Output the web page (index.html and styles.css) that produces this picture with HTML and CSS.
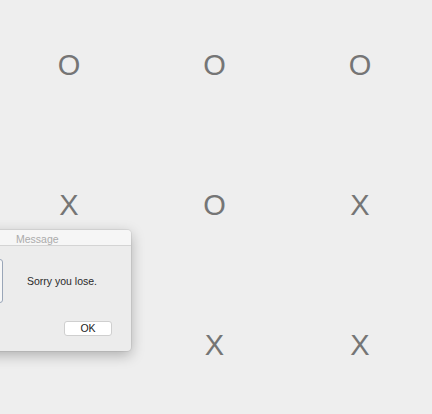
FILE: index.html
```html
<!DOCTYPE html>
<html>
<head>
<meta charset="utf-8">
<link rel="stylesheet" href="styles.css">
</head>
<body>
<div class="board">
  <div class="cell">O</div>
  <div class="cell">O</div>
  <div class="cell">O</div>
  <div class="cell">X</div>
  <div class="cell">O</div>
  <div class="cell">X</div>
  <div class="cell"></div>
  <div class="cell">X</div>
  <div class="cell">X</div>
</div>
<div class="dialog">
  <div class="titlebar">Message</div>
  <div class="body">
    <div class="content">
      <div class="icon"></div>
      <div class="msg">Sorry you lose.</div>
    </div>
    <div class="actions">
      <div class="btn">OK</div>
    </div>
  </div>
</div>
</body>
</html>
```
FILE: styles.css
```css
html, body {
  margin: 0;
  padding: 0;
  background: #eeeeee;
  width: 432px;
  height: 414px;
  overflow: hidden;
  font-family: "Liberation Sans", Arial, sans-serif;
}
.board {
  display: grid;
  grid-template-columns: repeat(3, 145.5px);
  grid-template-rows: repeat(3, 140px);
}
.cell {
  display: flex;
  align-items: center;
  justify-content: center;
  font-size: 29px;
  color: #757575;
  padding-bottom: 10px;
  padding-right: 7.5px;
  box-sizing: border-box;
}
.dialog {
  position: absolute;
  left: -200px;
  top: 230px;
  width: 331px;
  height: 121px;
  border-radius: 4px;
  background: #ececec;
  box-shadow: 0 4px 14px rgba(0,0,0,0.28), 0 0 0 1px rgba(0,0,0,0.06);
  overflow: hidden;
  display: flex;
  flex-direction: column;
}
.titlebar {
  height: 15px;
  background: #f6f6f6;
  border-bottom: 1px solid #d4d4d4;
  font-size: 10.5px;
  color: #ababab;
  line-height: 18px;
  padding-left: 216px;
  overflow: hidden;
}
.body {
  flex: 1;
  display: flex;
  flex-direction: column;
}
.content {
  display: flex;
  align-items: center;
  margin-top: 13px;
}
.icon {
  margin-left: 155px;
  width: 46px;
  height: 42px;
  border: 1px solid #9aa6b8;
  border-radius: 3px;
  background: #f7f7f7;
}
.msg {
  margin-left: 24px;
  font-size: 10.5px;
  color: #2a2a2a;
}
.actions {
  display: flex;
  justify-content: flex-end;
  margin-top: 18px;
  padding-right: 19px;
}
.btn {
  width: 46px;
  height: 13px;
  background: #ffffff;
  border: 1px solid #cfcfcf;
  border-radius: 3px;
  font-size: 10.5px;
  color: #222;
  text-align: center;
  line-height: 13px;
}
```
